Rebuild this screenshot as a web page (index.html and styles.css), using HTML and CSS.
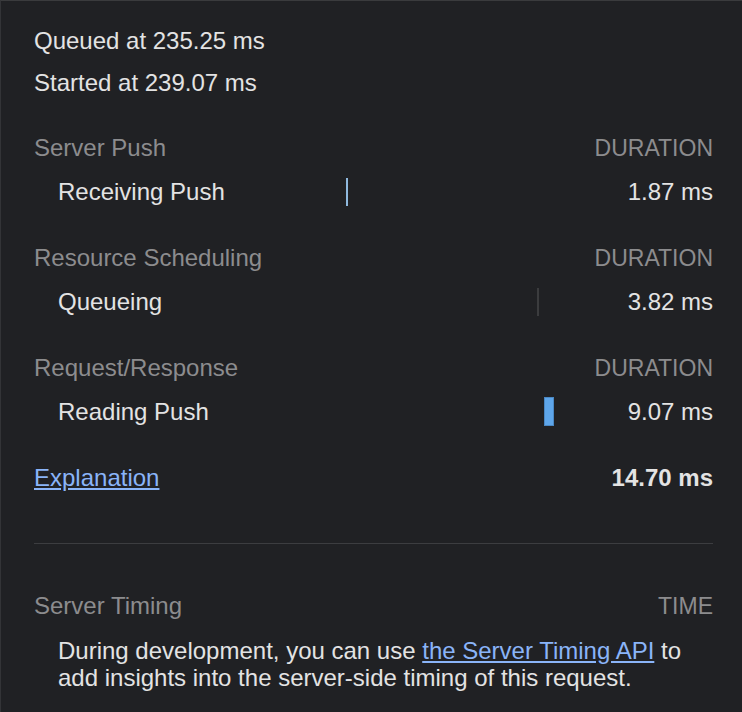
FILE: index.html
```html
<!DOCTYPE html>
<html>
<head>
<meta charset="utf-8">
<link rel="stylesheet" href="styles.css">
</head>
<body>
<div class="panel">
  <div class="meta">Queued at 235.25 ms</div>
  <div class="meta">Started at 239.07 ms</div>

  <div class="section">
    <div class="header"><span>Server Push</span><span class="caps">DURATION</span></div>
    <div class="row">
      <span class="name">Receiving Push</span>
      <span class="bars"><span class="bar bar-push" style="left:34.5%"></span></span>
      <span class="dur">1.87 ms</span>
    </div>
  </div>

  <div class="section">
    <div class="header"><span>Resource Scheduling</span><span class="caps">DURATION</span></div>
    <div class="row">
      <span class="name">Queueing</span>
      <span class="bars"><span class="bar bar-queue" style="left:93%"></span></span>
      <span class="dur">3.82 ms</span>
    </div>
  </div>

  <div class="section">
    <div class="header"><span>Request/Response</span><span class="caps">DURATION</span></div>
    <div class="row">
      <span class="name">Reading Push</span>
      <span class="bars"><span class="bar bar-read" style="left:95.2%"></span></span>
      <span class="dur">9.07 ms</span>
    </div>
  </div>

  <div class="total">
    <a class="link" href="#">Explanation</a>
    <span class="total-dur">14.70 ms</span>
  </div>

  <div class="divider"></div>

  <div class="header"><span>Server Timing</span><span class="caps">TIME</span></div>
  <p class="desc">During development, you can use <a class="link" href="#">the Server Timing API</a> to add insights into the server-side timing of this request.</p>
</div>
</body>
</html>
```

FILE: styles.css
```css
html, body {
  margin: 0;
  padding: 0;
  background: #202124;
}

.panel {
  box-sizing: border-box;
  width: 742px;
  height: 712px;
  overflow: hidden;
  background: #202124;
  border-top: 1px solid #3a3b3d;
  border-left: 1px solid #333437;
  padding: 19px 29px 0 33px;
  font-family: "Liberation Sans", Arial, sans-serif;
  font-size: 24px;
  color: #e3e3e3;
}

.meta {
  height: 42px;
  line-height: 42px;
  white-space: nowrap;
}

.section {
  margin-top: 22px;
}

.section:first-of-type {
  margin-top: 21px;
}

.header {
  display: flex;
  justify-content: space-between;
  height: 44px;
  line-height: 44px;
  color: #8c8c8e;
}

.caps {
  font-size: 23px;
}

.row {
  display: flex;
  align-items: center;
  height: 44px;
  line-height: 44px;
}

.name {
  width: 176px;
  padding-left: 24px;
  flex: none;
  white-space: nowrap;
}

.bars {
  position: relative;
  flex: 1;
  height: 44px;
}

.bar {
  position: absolute;
  top: 8px;
  height: 28px;
}

.bar-push {
  width: 2px;
  background: #8fb9de;
}

.bar-queue {
  width: 2px;
  background: #3b3c3e;
}

.bar-read {
  top: 7px;
  height: 29px;
  width: 10px;
  background: #5ea6ea;
  border: 1px solid #4a88c4;
  box-sizing: border-box;
}

.dur {
  width: 153px;
  flex: none;
  text-align: right;
}

.total {
  display: flex;
  justify-content: space-between;
  margin-top: 22px;
  height: 44px;
  line-height: 44px;
}

.total-dur {
  font-weight: bold;
}

.link {
  color: #8ab4f8;
  text-decoration: underline;
}

.divider {
  margin-top: 43px;
  margin-bottom: 40px;
  height: 1px;
  background: #3c3d40;
}

.desc {
  margin: 9px 18px 0 24px;
  line-height: 27px;
}
```
